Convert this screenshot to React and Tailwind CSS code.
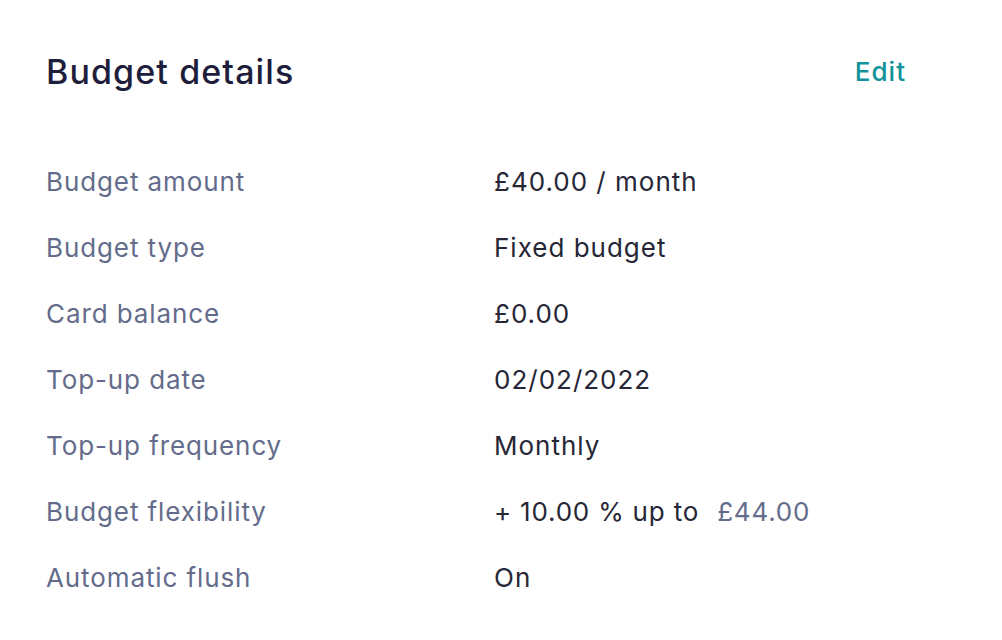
export default function App() {
  const rows = [
    ["Budget amount", "£40.00 / month"],
    ["Budget type", "Fixed budget"],
    ["Card balance", "£0.00"],
    ["Top-up date", "02/02/2022"],
    ["Top-up frequency", "Monthly"],
    ["Budget flexibility", null],
    ["Automatic flush", "On"],
  ];
  return (
    <div className="w-[1002px] h-[640px] bg-white pl-[46px] pr-[96px] pt-[49px]" style={{ fontFamily: "Inter, 'Noto Sans', sans-serif" }}>
      <div className="flex items-center justify-between h-[44px]">
        <h1 className="text-[34px] font-medium text-[#1e1e3c] tracking-[1.1px]">Budget details</h1>
        <button className="text-[26px] font-medium text-[#10939a] tracking-[1px]">Edit</button>
      </div>
      <div className="mt-[55px] flex flex-col">
        {rows.map(([label, value]) => (
          <div key={label} className="flex items-center h-[66px] text-[26px] tracking-[1px]">
            <div className="w-[448px] text-[#646c8b] tracking-[0.9px]">{label}</div>
            <div className="text-[#262636]">
              {value ?? (
                <span className="tracking-[0.8px]">
                  + 10.00 % up to <span className="ml-[10px] text-[#646c8b]">£44.00</span>
                </span>
              )}
            </div>
          </div>
        ))}
      </div>
    </div>
  );
}
